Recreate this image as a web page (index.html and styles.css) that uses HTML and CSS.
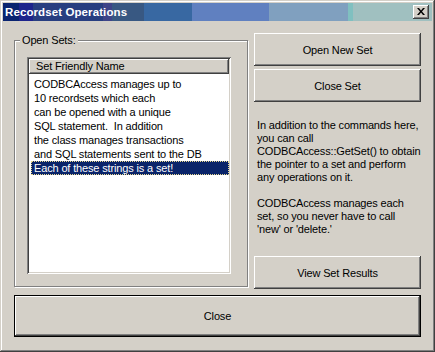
FILE: index.html
```html
<!DOCTYPE html>
<html>
<head>
<meta charset="utf-8">
<link rel="stylesheet" href="styles.css">
</head>
<body>
<div class="window">
  <div class="titlebar">
    <span class="title">Recordset Operations</span>
    <span class="tbtn">
      <svg width="8" height="7" viewBox="0 0 8 7"><path d="M0 0h2l2 2.5L6 0h2L5 3.5 8 7H6L4 4.5 2 7H0l3-3.5z" fill="#000"/></svg>
    </span>
  </div>
  <div class="content">
    <div class="main">
      <div class="group">
        <span class="legend">Open Sets:</span>
        <div class="list">
          <div class="header"><span class="hcell">Set Friendly Name</span></div>
          <div class="rows">
            <div class="row">CODBCAccess manages up to</div>
            <div class="row">10 recordsets which each</div>
            <div class="row">can be opened with a unique</div>
            <div class="row">SQL statement.&nbsp; In addition</div>
            <div class="row">the class manages transactions</div>
            <div class="row">and SQL statements sent to the DB</div>
            <div class="row sel"><span class="seltext">Each of these strings is a set!</span></div>
          </div>
        </div>
      </div>
      <div class="side">
        <button class="btn">Open New Set</button>
        <button class="btn btn2">Close Set</button>
        <p class="info">In addition to the commands here,<br>you can call<br>CODBCAccess::GetSet() to obtain<br>the pointer to a set and perform<br>any operations on it.<br><br>CODBCAccess manages each<br>set, so you never have to call<br>'new' or 'delete.'</p>
        <button class="btn btn-last">View Set Results</button>
      </div>
    </div>
    <button class="btn btn-default">Close</button>
  </div>
</div>
</body>
</html>
```

FILE: styles.css
```css
* { box-sizing: border-box; }
html, body { margin: 0; padding: 0; }
body {
  width: 435px;
  height: 352px;
  overflow: hidden;
  background: #d4d0c8;
  font-family: "Liberation Sans", Arial, sans-serif;
  font-size: 11px;
  letter-spacing: -0.15px;
  color: #000;
}
.window {
  width: 435px;
  height: 352px;
  padding: 3px;
  background: #d4d0c8;
  box-shadow: inset -1px -1px #404040, inset 1px 1px #d4d0c8, inset -2px -2px #808080, inset 2px 2px #fff;
}
.titlebar {
  height: 18px;
  display: flex;
  align-items: center;
  justify-content: space-between;
  padding-left: 2px;
  padding-right: 3px;
  background: linear-gradient(to right,
    #0a2470 0, #0a2470 16px,
    #1e248c 16px, #1e248c 30px,
    #283e80 30px, #283e80 100px,
    #3e4488 100px, #3e4488 109px,
    #385882 109px, #385882 141px,
    #3868a2 141px, #3868a2 189px,
    #6080c0 189px, #6080c0 266px,
    #80a0bf 266px, #80a0bf 345px,
    #80c0c0 345px, #80c0c0 350px,
    #a0c0c0 350px, #a0c0c0 100%);
}
.title {
  color: #fff;
  font-weight: bold;
  font-size: 11.5px;
  letter-spacing: 0.1px;
  line-height: 18px;
  white-space: nowrap;
}
.tbtn {
  width: 16px;
  height: 14px;
  background: #d4d0c8;
  display: flex;
  align-items: center;
  justify-content: center;
  padding: 0 1px 1px 0;
  box-shadow: inset -1px -1px #404040, inset 1px 1px #fff, inset -2px -2px #808080, inset 2px 2px #d4d0c8;
}
.tbtn svg { display: block; }
.content {
  padding: 12px 11px 0 11px;
}
.main {
  display: flex;
  gap: 6px;
  height: 256px;
}
.group {
  position: relative;
  width: 234px;
  height: 247px;
  margin-top: 7px;
  border: 1px solid #808080;
  box-shadow: inset 1px 1px #fff, 1px 1px #fff;
  padding: 16px 16px 0 12px;
}
.legend {
  position: absolute;
  top: -8px;
  left: 5px;
  padding: 0 2px 0 2px;
  background: #d4d0c8;
  line-height: 14px;
  white-space: nowrap;
}
.list {
  width: 204px;
  height: 217px;
  background: #fff;
  padding: 2px;
  box-shadow: inset 1px 1px #808080, inset -1px -1px #fff, inset 2px 2px #404040, inset -2px -2px #d4d0c8;
}
.header {
  height: 15px;
  background: #d4d0c8;
  display: flex;
}
.hcell {
  flex: 1;
  height: 15px;
  line-height: 14px;
  padding-left: 7px;
  white-space: nowrap;
  box-shadow: inset -1px -1px #404040, inset 1px 1px #fff, inset -2px -2px #808080;
}
.rows {
  padding-top: 3px;
}
.row {
  height: 14px;
  line-height: 14px;
  margin-left: 2px;
  padding-left: 3px;
  white-space: nowrap;
}
.row.sel {
  background: #0a246a;
  color: #fff;
  outline: 1px dotted #e8d890;
  outline-offset: -1px;
}
.side {
  width: 167px;
  display: flex;
  flex-direction: column;
}
.btn {
  display: block;
  width: 167px;
  height: 33px;
  margin: 0;
  padding: 0;
  border: none;
  background: #d4d0c8;
  font-family: "Liberation Sans", Arial, sans-serif;
  font-size: 11px;
  letter-spacing: -0.15px;
  color: #000;
  box-shadow: inset -1px -1px #404040, inset 1px 1px #fff, inset -2px -2px #808080, inset 2px 2px #d4d0c8;
}
.btn2 { margin-top: 3px; }
.btn-last { margin-top: auto; }
.info {
  margin: 17px 0 0 3px;
  line-height: 13px;
  white-space: nowrap;
}
.btn-default {
  width: 407px;
  height: 42px;
  margin-top: 6px;
  border: 1px solid #000;
}
```
